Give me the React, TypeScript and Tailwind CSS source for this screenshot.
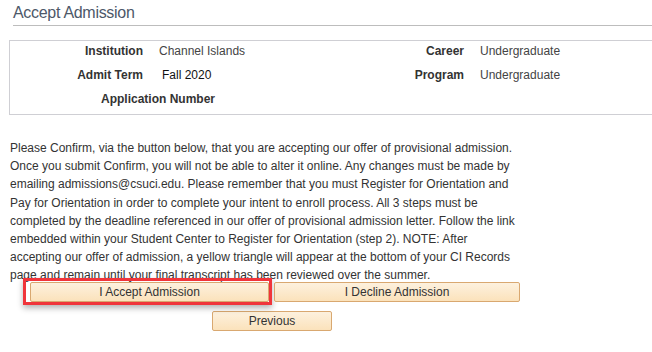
export default function App() {
  const btn =
    "block h-[20px] rounded-[2px] border border-[#d9a870] bg-gradient-to-b from-[#fdf1de] to-[#fbe2bb] text-[12px] leading-[18px] text-[#333]";

  return (
    <main className="h-[352px] w-[652px] overflow-hidden bg-white font-['Liberation_Sans',Arial,sans-serif] text-[#333]">
      <header className="ml-[13px] h-[26px] border-b border-[#bdbdbd] pt-[3px]">
        <h1 className="text-[16px] leading-[20px] tracking-[-0.3px] text-[#4d5869]">Accept Admission</h1>
      </header>

      <section className="ml-[9px] mt-[14px] h-[75px] w-[660px] border border-[#cfcfd4] pt-[1px] text-[12px] leading-[18px]">
        <div className="flex">
          <div className="w-[133px] text-right font-bold">Institution</div>
          <div className="w-[236px] pl-4 text-[#444]">Channel Islands</div>
          <div className="w-[85px] text-right font-bold">Career</div>
          <div className="pl-4 text-[#444]">Undergraduate</div>
        </div>
        <div className="mt-[6px] flex">
          <div className="w-[133px] text-right font-bold">Admit Term</div>
          <div className="w-[236px] pl-[19px] text-[#111]">Fall 2020</div>
          <div className="w-[85px] text-right font-bold">Program</div>
          <div className="pl-4 text-[#444]">Undergraduate</div>
        </div>
        <div className="mt-[6px] flex">
          <div className="pl-[91px] font-bold">Application Number</div>
        </div>
      </section>

      <p className="ml-[10px] mt-[24px] h-[145px] text-[12px] leading-[18.2px] text-[#333]">
        Please Confirm, via the button below, that you are accepting our offer of provisional admission.
        <br />
        Once you submit Confirm, you will not be able to alter it online. Any changes must be made by
        <br />
        emailing admissions@csuci.edu. Please remember that you must Register for Orientation and
        <br />
        Pay for Orientation in order to complete your intent to enroll process. All 3 steps must be
        <br />
        completed by the deadline referenced in our offer of provisional admission letter. Follow the link
        <br />
        embedded within your Student Center to Register for Orientation (step 2). NOTE: After
        <br />
        accepting our offer of admission, a yellow triangle will appear at the bottom of your CI Records
        <br />
        page and remain until your final transcript has been reviewed over the summer.
      </p>

      <div className="ml-[23px] mt-[-6px] flex items-start gap-[2px]">
        <div className="h-[27px] border-[3px] border-[#f0353b] pl-[4px] pt-[1px] shadow-[0_3px_6px_rgba(0,0,0,0.3)]">
          <button className={`${btn} w-[239px]`}>I Accept Admission</button>
        </div>
        <button className={`${btn} mt-[4px] w-[246px]`}>I Decline Admission</button>
      </div>

      <div className="ml-[212px] mt-[6px]">
        <button className={`${btn} h-[19px] w-[120px] leading-[17px]`}>Previous</button>
      </div>
    </main>
  );
}
